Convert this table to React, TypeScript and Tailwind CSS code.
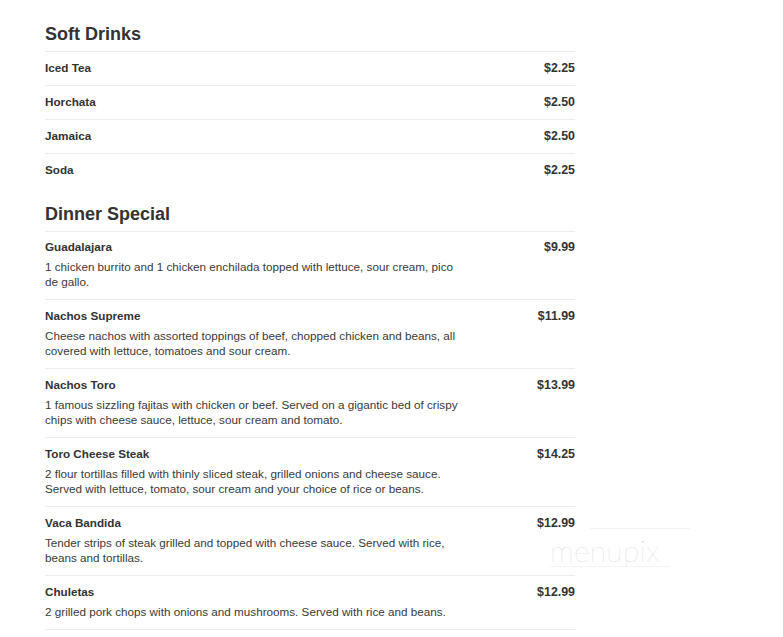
import React from "react";

type Item = {
  name: string;
  price: string;
  desc?: string;
};

const sections: { title: string; items: Item[]; more?: boolean }[] = [
  {
    title: "Soft Drinks",
    items: [
      { name: "Iced Tea", price: "$2.25" },
      { name: "Horchata", price: "$2.50" },
      { name: "Jamaica", price: "$2.50" },
      { name: "Soda", price: "$2.25" },
    ],
  },
  {
    title: "Dinner Special",
    more: true,
    items: [
      {
        name: "Guadalajara",
        price: "$9.99",
        desc: "1 chicken burrito and 1 chicken enchilada topped with lettuce, sour cream, pico de gallo.",
      },
      {
        name: "Nachos Supreme",
        price: "$11.99",
        desc: "Cheese nachos with assorted toppings of beef, chopped chicken and beans, all covered with lettuce, tomatoes and sour cream.",
      },
      {
        name: "Nachos Toro",
        price: "$13.99",
        desc: "1 famous sizzling fajitas with chicken or beef. Served on a gigantic bed of crispy chips with cheese sauce, lettuce, sour cream and tomato.",
      },
      {
        name: "Toro Cheese Steak",
        price: "$14.25",
        desc: "2 flour tortillas filled with thinly sliced steak, grilled onions and cheese sauce. Served with lettuce, tomato, sour cream and your choice of rice or beans.",
      },
      {
        name: "Vaca Bandida",
        price: "$12.99",
        desc: "Tender strips of steak grilled and topped with cheese sauce. Served with rice, beans and tortillas.",
      },
      {
        name: "Chuletas",
        price: "$12.99",
        desc: "2 grilled pork chops with onions and mushrooms. Served with rice and beans.",
      },
    ],
  },
];

const MenuRow = ({
  item,
  first,
  last,
}: {
  item: Item;
  first: boolean;
  last: boolean;
}) => (
  <div
    className={`flex justify-between pb-[10px] ${
      first && item.desc ? "pt-[8px]" : "pt-[9px]"
    } ${last ? "" : "border-b border-[#ececec]"}`}
  >
    <div className="w-[418px]">
      <div className="text-[11.7px] leading-[14px] font-bold text-[#333]">
        {item.name}
      </div>
      {item.desc && (
        <p className="mt-[5px] text-[11.7px] leading-[15px] text-[#3a3a3a]">
          {item.desc}
        </p>
      )}
    </div>
    <div className="text-[12.4px] leading-[14px] font-bold text-[#333]">
      {item.price}
    </div>
  </div>
);

export default function App() {
  return (
    <div className="relative min-h-[637px] bg-white font-['Liberation_Sans',Arial,sans-serif]">
      <div className="ml-[45px] w-[530px] pt-[23px]">
        {sections.map((section, si) => (
          <section key={section.title} className={si > 0 ? "mt-[16px]" : ""}>
            <h2 className="text-[18px] leading-[22px] font-bold text-[#333] pb-[6px] border-b border-[#ececec]">
              {section.title}
            </h2>
            {section.items.map((item, i) => (
              <MenuRow
                key={item.name}
                item={item}
                first={i === 0}
                last={!section.more && i === section.items.length - 1}
              />
            ))}
          </section>
        ))}
      </div>

      {/* watermark */}
      <div className="absolute left-[550px] top-[528px] pointer-events-none">
        <div className="h-px w-[100px] ml-[40px] bg-[#f4f4f4]" />
        <div className="mt-[6px] font-['Lato',sans-serif] font-thin text-[30px] leading-[30px] tracking-[0.3px] text-[#d2d2d2]">
          menupix
        </div>
        <div className="h-px w-[120px] mt-[1px] bg-[#f4f4f4]" />
      </div>
    </div>
  );
}
